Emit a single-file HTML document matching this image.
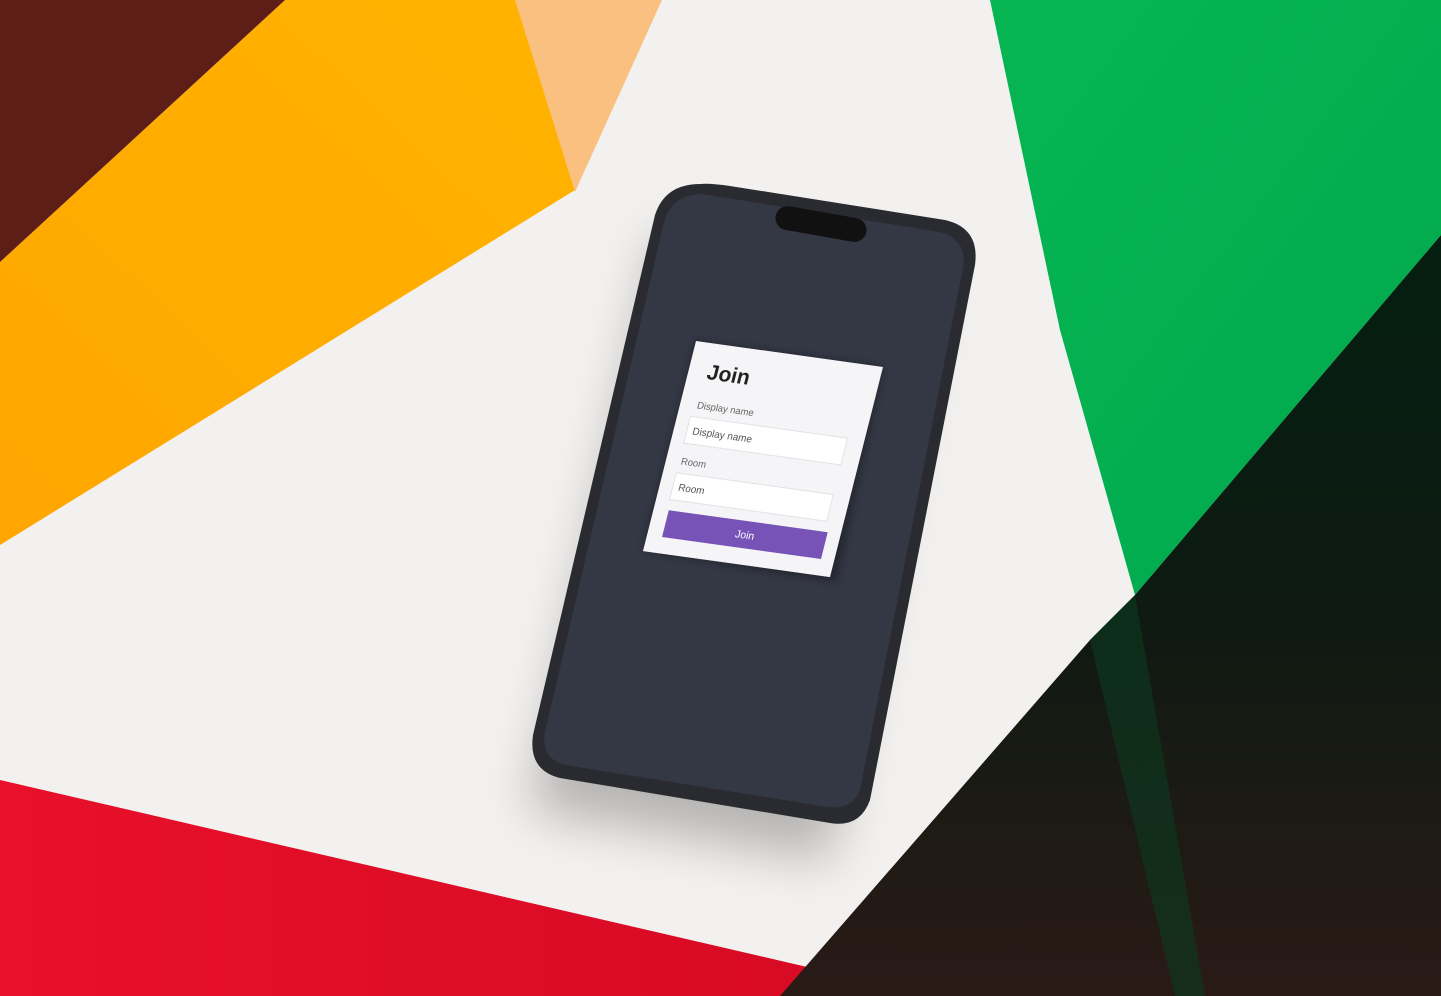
<!DOCTYPE html>
<html><head><meta charset="utf-8"><style>
html,body{margin:0;padding:0;width:1441px;height:996px;overflow:hidden;background:#f2f0ee}
svg{display:block}
</style></head><body>
<svg width="1441" height="996" viewBox="0 0 1441 996" xmlns="http://www.w3.org/2000/svg">
<defs>
<filter id="blur" x="-30%" y="-30%" width="160%" height="160%"><feGaussianBlur stdDeviation="25"/></filter>
<filter id="b4"><feGaussianBlur stdDeviation="4"/></filter>
<linearGradient id="yel" x1="0" y1="1" x2="1" y2="0">
<stop offset="0" stop-color="#ffa600"/><stop offset="1" stop-color="#ffb300"/></linearGradient>
<linearGradient id="grn" x1="0" y1="0" x2="1" y2="1">
<stop offset="0" stop-color="#07b653"/><stop offset="1" stop-color="#00a84d"/></linearGradient>
<linearGradient id="dk" x1="0" y1="0" x2="0" y2="1">
<stop offset="0" stop-color="#041f10"/><stop offset="0.5" stop-color="#0e1a12"/><stop offset="1" stop-color="#2a1a16"/></linearGradient>
<linearGradient id="red" x1="0" y1="0" x2="1" y2="0">
<stop offset="0" stop-color="#e8102a"/><stop offset="1" stop-color="#d80a24"/></linearGradient>
</defs>
<rect width="1441" height="996" fill="#f3f1ef"/>
<polygon points="0,262 285,0 520,0 575,190 0,545" fill="url(#yel)"/>
<polygon points="0,0 285,0 0,262" fill="#5c1e16"/>
<polygon points="515,0 662,0 575,192" fill="#f9c080"/>
<polygon points="0,780 0,996 800,996 820,970" fill="url(#red)"/>
<polygon points="990,0 1441,0 1441,235 1135,595 1060,330" fill="url(#grn)"/>
<polygon points="1441,235 1441,996 780,996 1090,640 1135,595" fill="url(#dk)"/>
<polygon points="1090,640 1135,595 1205,996 1175,996" fill="#0c3a20" opacity="0.6"/>
<path d="M690,215 L960,265 L860,840 L560,790 Z" fill="#000" opacity="0.25" filter="url(#blur)" transform="translate(-30,20)"/>
<path d="M700,184 Q710,183 730,186 L945,220 Q980,228 975,265 L870,800 Q860,828 830,823 L560,778 Q528,770 533,735 L655,215 Q665,184 700,184 Z" fill="#2a2b30"/>
<path d="M702,194 L940,232 Q968,240 963,268 L860,790 Q852,810 828,807 L565,765 Q540,758 545,732 L664,222 Q672,194 702,194 Z" fill="#343744"/>
<rect x="775" y="212" width="92" height="24" rx="12" fill="#111" transform="rotate(10 821 224)"/>
<polygon points="696,341 883,367 836,582 643,551" fill="#000" opacity="0.3" filter="url(#b4)"/>
<g transform="matrix(0.935,0.13,-0.241,0.955,696,341)">
<rect x="0" y="0" width="200" height="220" fill="#f5f5f7"/>
<text x="20" y="37" font-family="Liberation Sans, sans-serif" font-weight="bold" font-size="22" fill="#222">Join</text>
<text x="18" y="68" font-family="Liberation Sans, sans-serif" font-size="10" fill="#666">Display name</text>
<rect x="14" y="77" width="168" height="28" fill="#fff" stroke="#e2e2e6"/>
<text x="20" y="95" font-family="Liberation Sans, sans-serif" font-size="10.5" fill="#555">Display name</text>
<text x="16" y="127" font-family="Liberation Sans, sans-serif" font-size="10" fill="#666">Room</text>
<rect x="14" y="136" width="168" height="28" fill="#fff" stroke="#e2e2e6"/>
<text x="20" y="154" font-family="Liberation Sans, sans-serif" font-size="10.5" fill="#555">Room</text>
<rect x="16" y="175" width="170" height="28" fill="#7753b8"/>
<text x="101" y="193" text-anchor="middle" font-family="Liberation Sans, sans-serif" font-size="11" fill="#fff">Join</text>
</g>
</svg>
</body></html>
